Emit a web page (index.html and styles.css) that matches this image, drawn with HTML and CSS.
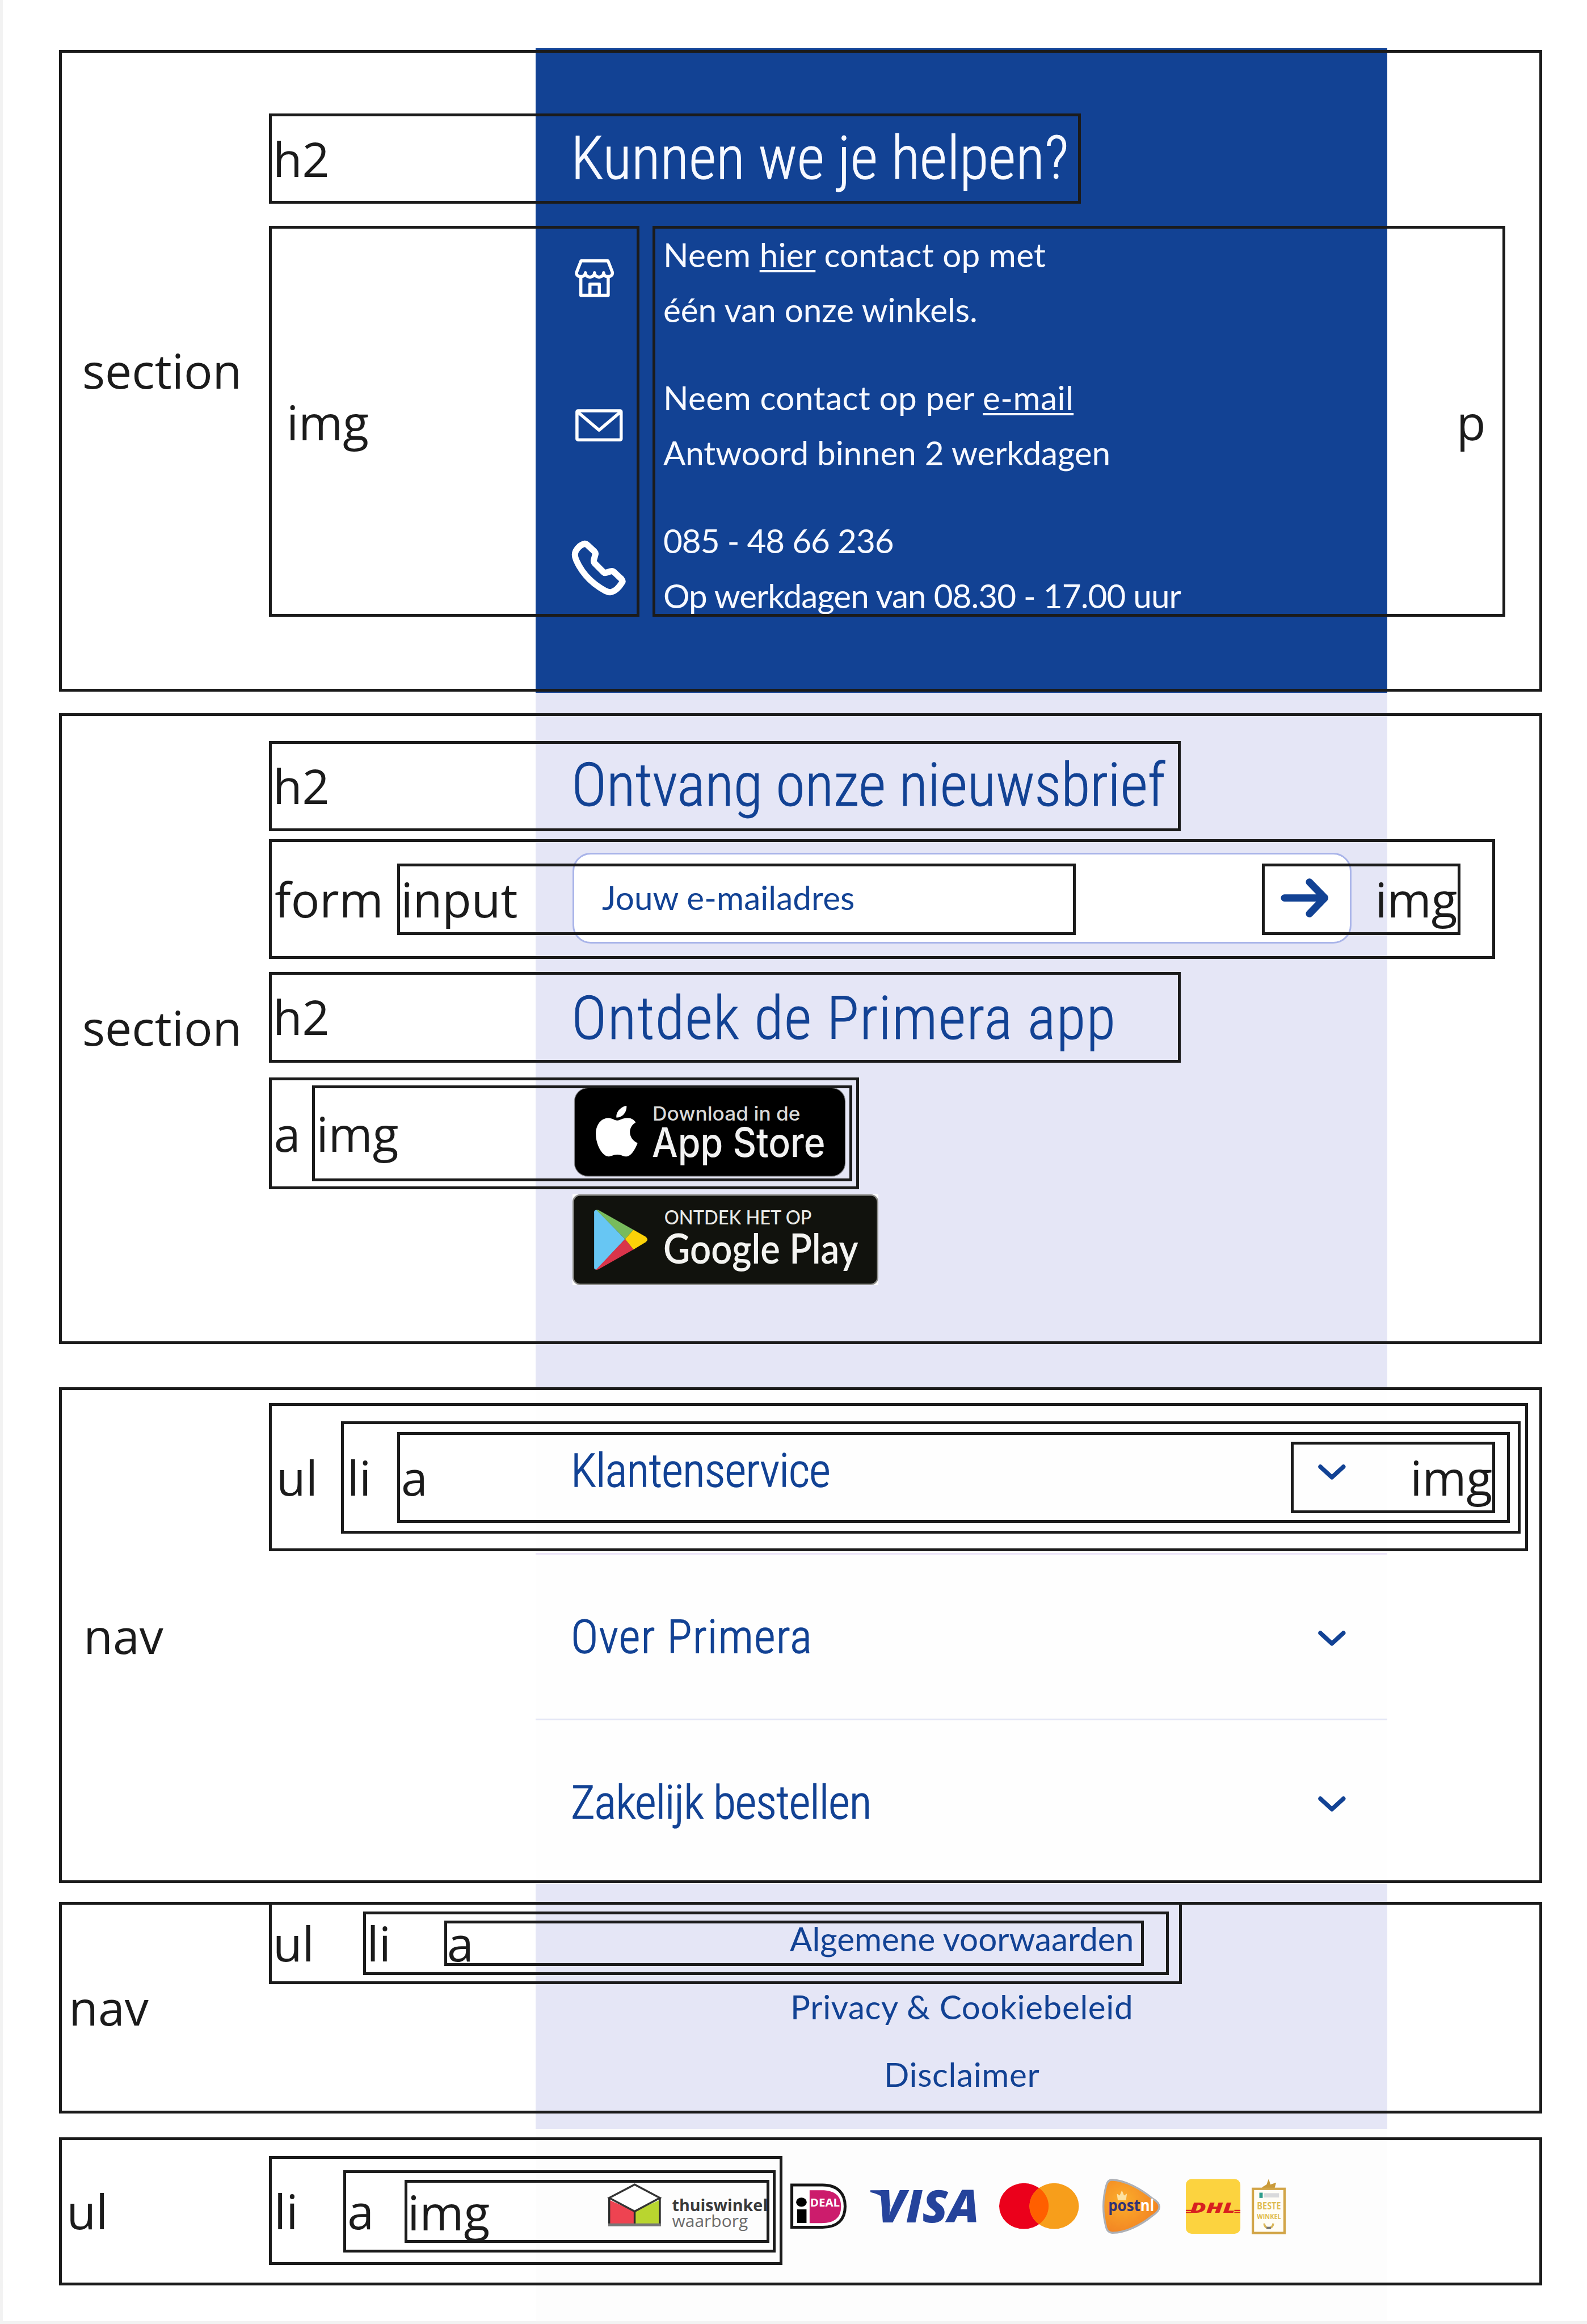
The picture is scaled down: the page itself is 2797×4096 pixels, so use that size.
FILE: index.html
```
<!DOCTYPE html>
<html lang="nl">
<head>
<meta charset="utf-8">
<title>Primera footer</title>
<link rel="stylesheet" href="styles.css">
</head>
<body>
<main class="phone">
  <section class="help">
    <h2 class="title">Kunnen we je helpen?</h2>
    <div class="contact">
      <div class="contact-row">
        <svg class="contact-icon" viewBox="1191 471.3 188.5 228" fill="none" stroke="#fff" stroke-width="6.5" stroke-linejoin="round" stroke-linecap="round">
          <path d="M1210 543H1266L1275 566C1277 573 1271 576 1266 576C1260 576 1257 572 1257 568C1257 573 1253 577 1247.500 577C1242 577 1238 573 1238 568C1238 573 1234 577 1228.500 577C1223 577 1219 573 1219 568C1219 572 1215 576 1210 576C1204 576 1199 573 1201 566Z"/>
          <path d="M1209.500 577V615H1266.500V577M1228.500 615V591.500H1248V615"/>
        </svg>
        <p class="contact-text"><span class="ls-a">Neem <a class="link">hier</a> contact op met</span><br>één van onze winkels.</p>
      </div>
      <div class="contact-row">
        <svg class="contact-icon" viewBox="1191 769.3 188.500 228" fill="none" stroke="#fff" stroke-width="6.500" stroke-linejoin="round">
          <rect x="1201.500" y="855.500" width="92" height="60.500" rx="2"/>
          <path d="M1204 859L1247.500 896L1291 859"/>
        </svg>
        <p class="contact-text"><span class="ls-m">Neem contact op per <a class="link">e-mail</a></span><br><span class="ls-c">Antwoord binnen 2 werkdagen</span></p>
      </div>
      <div class="contact-row">
        <svg class="contact-icon" viewBox="1191 1067.3 188.500 228" fill="none" stroke="#fff" stroke-width="13" stroke-linejoin="round">
          <path d="M1218 1132.500Q1221 1132.500 1224 1136L1238 1149Q1241 1152 1239.500 1156L1236.500 1167Q1236 1171 1239 1174L1257 1192Q1259 1194 1262 1193L1272 1190Q1276 1189 1279 1192L1294 1206Q1298 1211 1295 1214Q1285 1230 1274 1233Q1269 1235 1261 1231Q1218 1208 1200 1167Q1195 1156 1199 1148Q1205 1136 1218 1132.500Z"/>
        </svg>
        <p class="contact-text"><span class="ls-d">085 - 48 66 236</span><br><span class="ls-d">Op werkdagen van 08.30 - 17.00 uur</span></p>
      </div>
    </div>
  </section>

  <section class="news">
    <h2 class="title title-news">Ontvang onze nieuwsbrief</h2>
    <div class="field">
      <span class="placeholder">Jouw e-mailadres</span>
      <svg class="arrow" viewBox="0 0 101 84" fill="none" stroke="#124294" stroke-width="15" stroke-linecap="round" stroke-linejoin="round">
        <path d="M8 42H92M60 9L92 42L60 75"/>
      </svg>
    </div>
    <h2 class="title title-app">Ontdek de Primera app</h2>
    <svg class="app-store" viewBox="1196 2266.7 565 185">
      <rect x="1196.500" y="2267.2" width="564" height="184" rx="28" fill="#000" stroke="#8c8c90" stroke-width="1.500"/>
      <path fill="#fff" d="M1305 2304.500C1306 2317 1297 2329 1284 2329C1282 2318 1293 2306 1305 2304.500Z"/>
      <path fill="#fff" d="M1285 2335C1291 2335 1298 2329 1308 2330C1315 2330 1321 2334 1324 2339C1306 2350 1309 2374 1328 2382C1324 2393 1316 2408 1306 2410C1299 2411 1295 2406 1286 2406C1277 2406 1273 2410 1267 2410C1255 2410 1241 2386 1241 2363C1241 2343 1253 2330 1267 2330C1275 2330 1280 2335 1285 2335Z"/>
      <text class="inter" x="1359" y="2335" font-size="40" textLength="308" lengthAdjust="spacingAndGlyphs" fill="#d9d9d9">Download in de</text>
      <text class="inter" x="1358" y="2411" font-size="84" textLength="361" lengthAdjust="spacingAndGlyphs" fill="#f2f2f2">App Store</text>
    </svg>
    <svg class="google-play" viewBox="1192 2490 637 189">
      <rect x="1192" y="2490" width="637" height="189" fill="#fff"/>
      <rect x="1193.500" y="2491.500" width="634" height="186" rx="14" fill="#11120d" stroke="#8f8f8c" stroke-width="3"/>
      <path fill="#67c6f3" d="M1237 2527Q1237 2522 1243 2523L1301.500 2583L1243 2646Q1237 2648 1237 2642Z"/>
      <path fill="#78bb5c" d="M1241 2522Q1245 2521 1250 2525L1319 2564L1301.500 2583Z"/>
      <path fill="#d9344a" d="M1241 2647Q1245 2648 1250 2644L1319 2605L1301.500 2583Z"/>
      <path fill="#fcd208" d="M1319 2564L1344 2578Q1352 2584 1344 2590L1319 2605L1301.500 2583Z"/>
      <text class="lato medium" x="1383" y="2552.700" font-size="42" textLength="307" lengthAdjust="spacingAndGlyphs" fill="#e9e9e6">ONTDEK HET OP</text>
      <text class="lato semi" x="1381" y="2634" font-size="86" textLength="406" lengthAdjust="spacingAndGlyphs" fill="#f4f4f1">Google Play</text>
    </svg>
  </section>

  <nav class="menu">
    <div class="menu-item menu-first"><span class="ls-e">Klantenservice</span><svg class="chevron" viewBox="0 0 60 34"><path d="M6 6L30 28L54 6"/></svg></div>
    <div class="menu-item menu-second"><span class="ls-f">Over Primera</span><svg class="chevron" viewBox="0 0 60 34"><path d="M6 6L30 28L54 6"/></svg></div>
    <div class="menu-item menu-third"><span class="ls-g">Zakelijk bestellen</span><svg class="chevron" viewBox="0 0 60 34"><path d="M6 6L30 28L54 6"/></svg></div>
  </nav>

  <nav class="legal">
    <a>Algemene voorwaarden</a>
    <a class="ls-b">Privacy &amp; Cookiebeleid</a>
    <a class="ls-b">Disclaimer</a>
  </nav>

  <div class="logos">
    <svg class="logo-thuis" viewBox="1266 4538 344 115">
      <path fill="#ee4351" d="M1268 4582L1321 4606V4634H1268Z"/>
      <path fill="#b9d52f" d="M1373.500 4582L1321 4606V4634H1373.500Z"/>
      <path fill="#fff" stroke="#333" stroke-width="4" d="M1268 4578L1321 4550L1373.500 4578L1321 4606Z"/>
      <path fill="none" stroke="#2b2b2b" stroke-width="4" d="M1268 4577V4636M1373.500 4577V4636M1321 4606V4634"/>
      <rect x="1266" y="4631" width="110" height="6" fill="#777"/>
      <text class="open bold" x="1399" y="4605" font-size="34" textLength="199" lengthAdjust="spacingAndGlyphs" fill="#3a3a3a">thuiswinkel</text>
      <text class="open" x="1399" y="4638" font-size="34" textLength="158" lengthAdjust="spacingAndGlyphs" fill="#6c6c6c">waarborg</text>
    </svg>
    <svg class="logo-ideal" viewBox="1645 4538 118 115">
      <path fill="#fff" stroke="#161616" stroke-width="6" d="M1648 4551H1712C1744 4551 1759 4569 1759 4595.500C1759 4622 1744 4639 1712 4639H1648Z"/>
      <path fill="#cc1c6c" d="M1685 4562H1710C1738 4562 1750.500 4574 1750.500 4596C1750.500 4618 1738 4630.500 1710 4630.500H1685Z"/>
      <ellipse cx="1668" cy="4586.700" rx="11" ry="9.500"/>
      <rect x="1659" y="4601.700" width="19.600" height="28.500"/>
      <text class="open bold" x="1686" y="4596" font-size="24" textLength="62" lengthAdjust="spacingAndGlyphs" fill="#fff">DEAL</text>
    </svg>
    <svg class="logo-visa" viewBox="1812 4538 222 115">
      <path fill="#25439b" d="M1812 4562H1848L1854 4596Q1842 4572 1812 4566Z"/>
      <text class="open heavy" x="1826" y="4629" font-size="94" textLength="213" lengthAdjust="spacingAndGlyphs" fill="#25439b">VISA</text>
    </svg>
    <svg class="logo-mc" viewBox="2080 4538 166 115">
      <ellipse cx="2131.500" cy="4595" rx="51.500" ry="47.700" fill="#eb001b"/>
      <ellipse cx="2194.500" cy="4595" rx="51.500" ry="47.700" fill="#f79e1b"/>
      <path fill="#ff5f00" d="M2163 4557.300A51.500 47.700 0 0 1 2163 4632.700A51.500 47.700 0 0 1 2163 4557.300Z"/>
    </svg>
    <svg class="logo-post" viewBox="2295 4538 122 115">
      <defs><radialGradient id="orange" cx=".35" cy=".4" r=".7"><stop offset="0" stop-color="#fbae2b"/><stop offset="1" stop-color="#f28022"/></radialGradient></defs>
      <path fill="url(#orange)" stroke="#adb0b6" stroke-width="4" d="M2315 4540C2343 4541 2376 4560 2399 4579Q2428 4596 2399 4615C2376 4634 2343 4651 2315 4650.500Q2306 4650 2303 4640Q2291 4596 2303 4552Q2306 4540 2315 4540Z"/>
      <path fill="#fde2a0" d="M2325 4569L2331 4573L2335.500 4562L2340 4573L2346 4569L2344 4583H2327Z"/>
      <text class="open bold" x="2307" y="4605" font-size="34" textLength="67" lengthAdjust="spacingAndGlyphs" fill="#303275">post</text>
      <text class="open bold" x="2374" y="4605" font-size="34" textLength="29" lengthAdjust="spacingAndGlyphs" fill="#fff">nl</text>
    </svg>
    <svg class="logo-dhl" viewBox="2469 4538 114 115">
      <rect x="2469" y="4538.700" width="113.500" height="114" rx="12" fill="#fcd33f"/>
      <path stroke="#d8201f" stroke-width="2.500" d="M2469 4604H2481M2469 4608H2480M2570 4604H2582.500M2570 4608H2582.500"/>
      <text class="open heavy" x="2478" y="4609" font-size="30" textLength="94" lengthAdjust="spacingAndGlyphs" fill="#d8201f">DHL</text>
    </svg>
    <svg class="logo-award" viewBox="2606 4538 72 115">
      <path fill="#c99a3a" d="M2627 4556L2637 4550L2641.500 4538L2645 4550L2657 4546L2654 4557H2629Z"/>
      <rect x="2608.500" y="4559" width="66" height="92" fill="#fffdf6" stroke="#d2a548" stroke-width="5"/>
      <rect x="2622" y="4567" width="7" height="11" fill="#2f9d8b"/>
      <rect x="2631" y="4568" width="32" height="9" fill="#d9dadb"/>
      <text class="open bold" x="2617" y="4602" font-size="20" textLength="50" lengthAdjust="spacingAndGlyphs" fill="#dfbd55">BESTE</text>
      <text class="open bold" x="2617" y="4622" font-size="14" textLength="50" lengthAdjust="spacingAndGlyphs" fill="#dfbd55">WINKEL</text>
      <path fill="none" stroke="#d9b75a" stroke-width="4" d="M2632 4631Q2633 4640 2641 4641Q2650 4640 2651 4631"/>
      <rect x="2637" y="4638" width="9" height="5" fill="#777"/>
    </svg>
  </div>
</main>

<div class="notes">
  <div class="box help-section"><span>section</span></div>
  <div class="box help-h2"><span>h2</span></div>
  <div class="box help-img"><span>img</span></div>
  <div class="box help-p"><span>p</span></div>

  <div class="box news-section"><span>section</span></div>
  <div class="box news-h2"><span>h2</span></div>
  <div class="box news-form"><span>form</span></div>
  <div class="box news-input"><span>input</span></div>
  <div class="box news-img"><span>img</span></div>
  <div class="box app-h2"><span>h2</span></div>
  <div class="box app-a"><span>a</span></div>
  <div class="box app-img"><span>img</span></div>

  <div class="box menu-nav"><span>nav</span></div>
  <div class="box menu-ul"><span>ul</span></div>
  <div class="box menu-li"><span>li</span></div>
  <div class="box menu-a"><span>a</span></div>
  <div class="box menu-img"><span>img</span></div>

  <div class="box legal-nav"><span>nav</span></div>
  <div class="box legal-ul"><span>ul</span></div>
  <div class="box legal-li"><span>li</span></div>
  <div class="box legal-a"><span>a</span></div>

  <div class="box logos-ul"><span>ul</span></div>
  <div class="box logos-li"><span>li</span></div>
  <div class="box logos-a"><span>a</span></div>
  <div class="box logos-img"><span>img</span></div>
</div>
</body>
</html>
```
FILE: styles.css
```
/* 1rem = 100 design units */
html { font-size: 84.628px; }
* { box-sizing: border-box; margin: 0; padding: 0; }
body {
  position: relative;
  width: 33.05rem;
  height: 48.4rem;
  overflow: hidden;
  background: #fff;
  border-left: .06rem solid #f2f2f2;
  border-bottom: .06rem solid #f2f2f2;
  font-family: "Lato", "Open Sans", sans-serif;
}
svg { display: block; flex: none; overflow: visible; }

/* Page column */
.phone {
  margin-left: 11.09rem;
  width: 17.744rem;
  height: 48.34rem;
  padding-top: 1.005rem;
  background: linear-gradient(#fff 10%, #fdfdfd 90%);
}
.title {
  font-family: "Roboto Condensed", Roboto, sans-serif;
  font-weight: 300;
  font-size: 1.24rem;
  line-height: 1.86rem;
  white-space: nowrap;
  -webkit-text-stroke: .011rem currentColor;
}
.help {
  height: 13.425rem;
  padding: 1.371rem 0 0 .74rem;
  background: #124294;
  color: #f7f9ff;
}
.contact { display: flex; flex-direction: column; gap: .7rem; margin-top: .477rem; padding-left: .024rem; }
.contact-row { display: flex; }
.contact-icon { width: 1.885rem; height: 2.28rem; }
.contact-text { font-size: .69rem; line-height: 1.14rem; height: 2.28rem; padding: .015rem 0 0 .015rem; white-space: nowrap; }
.link { text-decoration: underline; text-decoration-thickness: .05rem; text-underline-offset: .06rem; text-decoration-skip-ink: none; }
.ls-a { letter-spacing: .0035rem; }
.ls-b { letter-spacing: .0075rem; }
.ls-c { letter-spacing: -.001rem; }
.ls-d { letter-spacing: -.0112rem; }
.ls-e { letter-spacing: -.0055rem; }
.ls-f { letter-spacing: .018rem; }
.ls-g { letter-spacing: -.0085rem; }
.ls-m { letter-spacing: .0055rem; }

.news {
  height: 14.46rem;
  padding: 1.001rem 0 0 .754rem;
  background: #e5e6f6;
  color: #124294;
}
.title-news { letter-spacing: -.002rem; }
.title-app { margin-top: .636rem; letter-spacing: .0185rem; }
.field {
  display: flex;
  align-items: center;
  justify-content: space-between;
  width: 16.22rem;
  height: 1.895rem;
  margin: .464rem 0 0 .02rem;
  padding: 0 .43rem 0 .58rem;
  border: .04rem solid #a9b4e9;
  border-radius: .38rem;
  background: #fff;
}
.placeholder { font-size: .69rem; line-height: 1.14rem; padding-bottom: .03rem; letter-spacing: .001rem; }
.arrow { width: 1.01rem; height: .84rem; }
.app-store { width: 5.65rem; height: 1.85rem; margin: .501rem 0 0 .06rem; }
.google-play { width: 6.37rem; height: 1.89rem; margin: .383rem 0 0 .02rem; }
.inter { font-family: Inter, sans-serif; font-weight: 500; }
.lato { font-family: Lato, sans-serif; }
.open { font-family: "Open Sans", sans-serif; }
.medium { font-weight: 500; }
.semi { font-weight: 600; }
.bold { font-weight: 700; }
.heavy { font-weight: 800; font-style: italic; }

.menu { height: 10.345rem; background: #fefefe; color: #124294; }
.menu-item {
  display: flex;
  align-items: center;
  justify-content: space-between;
  padding: 0 .85rem 0 .74rem;
  font-family: "Roboto Condensed", Roboto, sans-serif;
  font-size: .96rem;
  font-weight: 300;
  -webkit-text-stroke: .016rem currentColor;
}
.menu-item span { padding-top: .04rem; }
.menu-first { height: 3.485rem; border-bottom: .045rem solid #ebe4f8; }
.menu-second { height: 3.45rem; border-bottom: .045rem solid #e3e6f5; }
.menu-third { height: 3.41rem; }
.chevron { width: .6rem; height: .34rem; margin-top: .08rem; }
.chevron path { fill: none; stroke: #124294; stroke-width: 9; stroke-linecap: round; stroke-linejoin: round; }

.legal {
  display: flex;
  flex-direction: column;
  align-items: center;
  height: 5.105rem;
  padding: .431rem 0 0 .02rem;
  background: #e5e6f6;
  color: #124294;
  font-size: .69rem;
  line-height: 1.415rem;
}

.logos { display: flex; padding: 1.04rem 0 0 1.518rem; }
.logos svg { height: 1.15rem; }
.logo-thuis { width: 3.44rem; }
.logo-ideal { width: 1.18rem; margin-left: .35rem; }
.logo-visa { width: 2.22rem; margin-left: .49rem; }
.logo-mc { width: 1.66rem; margin-left: .46rem; }
.logo-post { width: 1.22rem; margin-left: .49rem; }
.logo-dhl { width: 1.14rem; margin-left: .52rem; }
.logo-award { width: .72rem; margin-left: .23rem; }

/* Element outlines drawn over the page */
.notes { position: absolute; top: 0; left: -.06rem; width: 33.05rem; height: 48.4rem; }
.box {
  position: absolute;
  border: 5px solid #1b1b1b;
  color: #1b1b1b;
  font-family: "Open Sans", sans-serif;
  font-size: .995rem;
  line-height: 1.04rem;
  white-space: nowrap;
}
.box span { display: block; margin-left: .02rem; }

.help-section { left: 1.225rem; top: 1.045rem; width: 30.895rem; height: 13.365rem; padding: 6.09rem 0 0 .41rem; }
.help-h2 { left: 5.605rem; top: 2.368rem; width: 16.91rem; height: 1.87rem; padding: .36rem 0 0 0; }
.help-img { left: 5.605rem; top: 4.707rem; width: 7.71rem; height: 8.14rem; padding: 3.5rem 0 0 .285rem; }
.help-p { left: 13.585rem; top: 4.707rem; width: 17.765rem; height: 8.14rem; padding: 3.5rem 0 0 16.67rem; }

.news-section { left: 1.225rem; top: 14.854rem; width: 30.895rem; height: 13.145rem; padding: 5.97rem 0 0 .41rem; }
.news-h2 { left: 5.605rem; top: 15.434rem; width: 18.98rem; height: 1.875rem; padding: .358rem 0 0 0; }
.news-form { left: 5.605rem; top: 17.48rem; width: 25.535rem; height: 2.49rem; padding: .672rem 0 0 .04rem; }
.news-input { left: 8.27rem; top: 17.98rem; width: 14.14rem; height: 1.49rem; padding: .172rem 0 0 0; }
.news-img { left: 26.285rem; top: 17.98rem; width: 4.135rem; height: 1.49rem; padding: .172rem 0 0 2.275rem; }
.app-h2 { left: 5.605rem; top: 20.247rem; width: 18.98rem; height: 1.883rem; padding: .355rem 0 0 0; }
.app-a { left: 5.605rem; top: 22.44rem; width: 12.29rem; height: 2.33rem; padding: .592rem 0 0 .02rem; }
.app-img { left: 6.505rem; top: 22.605rem; width: 11.24rem; height: 1.995rem; padding: .427rem 0 0 .005rem; }

.menu-nav { left: 1.225rem; top: 28.895rem; width: 30.895rem; height: 10.325rem; padding: 4.587rem 0 0 .438rem; }
.menu-ul { left: 5.605rem; top: 29.217rem; width: 26.22rem; height: 3.093rem; padding: .973rem 0 0 .072rem; }
.menu-li { left: 7.1rem; top: 29.6rem; width: 24.567rem; height: 2.334rem; padding: .59rem 0 0 .05rem; }
.menu-a { left: 8.267rem; top: 29.83rem; width: 23.18rem; height: 1.88rem; padding: .36rem 0 0 .01rem; }
.menu-img { left: 26.885rem; top: 30.02rem; width: 4.255rem; height: 1.5rem; padding: .17rem 0 0 2.405rem; }

.legal-nav { left: 1.225rem; top: 39.61rem; width: 30.895rem; height: 4.405rem; padding: 1.62rem 0 0 .13rem; }
.legal-ul { left: 5.605rem; top: 39.61rem; width: 19.012rem; height: 1.716rem; padding: .28rem 0 0 0; }
.legal-li { left: 7.562rem; top: 39.81rem; width: 16.778rem; height: 1.318rem; padding: .08rem 0 0 0; }
.legal-a { left: 9.254rem; top: 40.004rem; width: 14.57rem; height: .938rem; }
.legal-a span { margin: -.115rem 0 0 0; }

.logos-ul { left: 1.225rem; top: 44.51rem; width: 30.895rem; height: 3.09rem; padding: .96rem 0 0 .085rem; }
.logos-li { left: 5.605rem; top: 44.9rem; width: 10.69rem; height: 2.27rem; padding: .565rem 0 0 .025rem; }
.logos-a { left: 7.145rem; top: 45.2rem; width: 9.01rem; height: 1.707rem; padding: .272rem 0 0 .01rem; }
.logos-img { left: 8.424rem; top: 45.393rem; width: 7.596rem; height: 1.317rem; padding: .1rem 0 0 0; }
.logos-img span { margin-left: .005rem; }
```
